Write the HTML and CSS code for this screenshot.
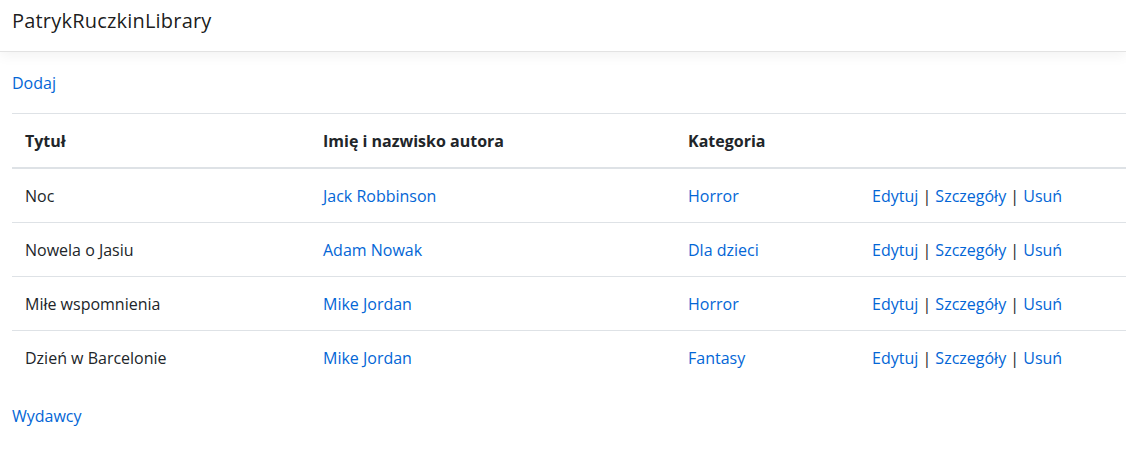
FILE: index.html
```html
<!DOCTYPE html>
<html lang="pl">
<head>
<meta charset="utf-8">
<title>PatrykRuczkinLibrary</title>
<link rel="stylesheet" href="styles.css">
</head>
<body>
<header class="navbar">
  <a class="brand" href="#">PatrykRuczkinLibrary</a>
</header>
<main class="container">
  <p class="create"><a href="#">Dodaj</a></p>
  <table class="table">
    <thead>
      <tr>
        <th class="c-title">Tytuł</th>
        <th class="c-author">Imię i nazwisko autora</th>
        <th class="c-cat">Kategoria</th>
        <th class="c-act"></th>
      </tr>
    </thead>
    <tbody>
      <tr>
        <td>Noc</td>
        <td><a href="#">Jack Robbinson</a></td>
        <td><a href="#">Horror</a></td>
        <td><a href="#">Edytuj</a> | <a href="#">Szczegóły</a> | <a href="#">Usuń</a></td>
      </tr>
      <tr>
        <td>Nowela o Jasiu</td>
        <td><a href="#">Adam Nowak</a></td>
        <td><a href="#">Dla dzieci</a></td>
        <td><a href="#">Edytuj</a> | <a href="#">Szczegóły</a> | <a href="#">Usuń</a></td>
      </tr>
      <tr>
        <td>Miłe wspomnienia</td>
        <td><a href="#">Mike Jordan</a></td>
        <td><a href="#">Horror</a></td>
        <td><a href="#">Edytuj</a> | <a href="#">Szczegóły</a> | <a href="#">Usuń</a></td>
      </tr>
      <tr>
        <td>Dzień w Barcelonie</td>
        <td><a href="#">Mike Jordan</a></td>
        <td><a href="#">Fantasy</a></td>
        <td><a href="#">Edytuj</a> | <a href="#">Szczegóły</a> | <a href="#">Usuń</a></td>
      </tr>
    </tbody>
  </table>
  <p class="footer-link"><a href="#">Wydawcy</a></p>
</main>
</body>
</html>
```

FILE: styles.css
```css
* { box-sizing: border-box; }
html, body {
  margin: 0;
  padding: 0;
  background: #fff;
}
body {
  font-family: "Segoe UI", "Open Sans", "Liberation Sans", sans-serif;
  font-size: 16px;
  line-height: 24px;
  color: #212529;
  overflow: hidden;
}
a {
  color: #0366d6;
  text-decoration: none;
}
.navbar {
  height: 52px;
  padding: 6px 12px 0;
  border-bottom: 1px solid #e3e3e3;
  box-shadow: 0 4px 12px rgba(0, 0, 0, 0.05);
  background: #fff;
}
.brand {
  display: inline-block;
  font-size: 20px;
  line-height: 30px;
  color: rgba(0, 0, 0, 0.9);
  letter-spacing: 0.2px;
}
.container {
  padding: 0 0 0 12px;
}
.create {
  margin: 19px 0 18px;
}
.table {
  width: 100%;
  border-collapse: collapse;
  margin-bottom: 20px;
}
.table th,
.table td {
  text-align: left;
  vertical-align: top;
  padding: 15px 12px 14px 13px;
  border-top: 1px solid #dee2e6;
}
.table th {
  font-weight: 700;
  border-bottom: 2px solid #dee2e6;
}
.c-title { width: 298px; }
.c-author { width: 365px; }
.c-cat { width: 184px; }
.footer-link {
  margin: 0;
}
```
